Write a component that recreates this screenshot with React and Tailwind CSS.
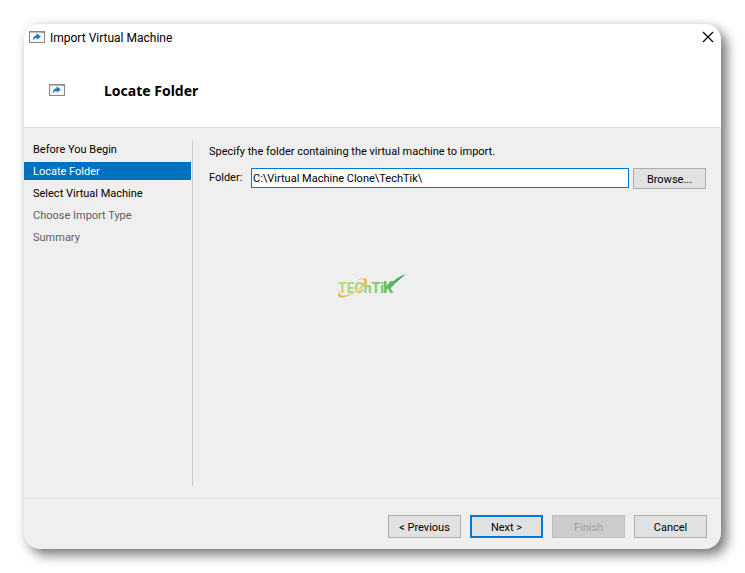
import { useState } from 'react';

const steps = [
  { name: 'Before You Begin', status: 'open' },
  { name: 'Locate Folder', status: 'current' },
  { name: 'Select Virtual Machine', status: 'open' },
  { name: 'Choose Import Type', status: 'locked' },
  { name: 'Summary', status: 'locked' },
];

const stepStyles = {
  open: 'text-black',
  current: 'bg-[#0072bd] text-white',
  locked: 'text-[#606060]',
};

const buttonStyles = {
  normal: 'border border-[#adadad] bg-[#e1e1e1] text-black',
  primary: 'border-2 border-[#0078d7] bg-[#e1e1e1] text-black',
  disabled: 'border border-[#bfbfbf] bg-[#cccccc] text-[#a0a0a0]',
};

const ImportIcon = () => (
  <svg width="16" height="12" viewBox="0 0 16 12" aria-hidden="true">
    <rect x="0.5" y="0.5" width="15" height="11" fill="#f6f6f6" stroke="#86888a" />
    <path d="M0 0.7H16" stroke="#86888a" strokeWidth="1.4" />
    <path d="M12 1.5H13M14 1.5H15" stroke="#86888a" />
    <path
      d="M7.6 2.2L11.8 5.5L7.9 8.8V7.1C6.2 7.1 5.2 7.8 4 9.6C3.8 6.6 5 4.6 7.6 4.3Z"
      fill="#2478bf"
    />
  </svg>
);

const CloseIcon = () => (
  <svg width="12" height="12" viewBox="0 0 12 12" aria-hidden="true">
    <path d="M1 1L11 11M11 1L1 11" stroke="#000" strokeWidth="1.2" />
  </svg>
);

const Logo = () => (
  <svg width="70" height="26" viewBox="0 0 70 26" role="img" aria-label="TechTik">
    <defs>
      <linearGradient id="leaf" x1="0" x2="1">
        <stop offset="0" stopColor="#b8d98a" />
        <stop offset="0.5" stopColor="#a3d376" />
        <stop offset="1" stopColor="#72c163" />
      </linearGradient>
      <linearGradient id="check" x1="0" x2="1">
        <stop offset="0" stopColor="#6cc064" />
        <stop offset="1" stopColor="#2e9a50" />
      </linearGradient>
      <linearGradient id="gold" x1="0" y1="1" x2="1" y2="0">
        <stop offset="0" stopColor="#dfae1c" />
        <stop offset="0.5" stopColor="#f3e08a" />
        <stop offset="1" stopColor="#e6b422" />
      </linearGradient>
    </defs>
    <text
      x="1"
      y="20"
      fill="url(#leaf)"
      className="font-['Roboto',sans-serif] text-[14px] font-bold"
    >
      TEChTi
    </text>
    <text
      x="46"
      y="20"
      fill="#5dba61"
      className="font-['Roboto',sans-serif] text-[16px] font-bold"
    >
      K
    </text>
    <path d="M49 15C54 9 61 4 69 1C64 5 58 10 54 15L51 16Z" fill="url(#check)" />
    <path
      d="M5 17C-1 21 0 26 8 24C17 22 30 13 30 8C30 4 24 5 19 8C24 6 28 5 27 9C25 14 14 22 7 22.5C2 23 2 20 5 17Z"
      fill="url(#gold)"
    />
  </svg>
);

const Button = ({ variant = 'normal', className = 'h-[23px]', children }) => (
  <button
    type="button"
    disabled={variant === 'disabled'}
    className={`w-[73px] shrink-0 flex items-center justify-center whitespace-nowrap pt-0.5 ${buttonStyles[variant]} ${className}`}
  >
    {children}
  </button>
);

const App = () => {
  const [folder, setFolder] = useState('C:\\Virtual Machine Clone\\TechTik\\');

  return (
    <div className="min-h-screen bg-white p-6 flex font-['Roboto',sans-serif] text-[11px] leading-4 text-black">
      <div
        role="dialog"
        aria-labelledby="title"
        className="flex-1 min-w-0 flex flex-col overflow-hidden rounded-2xl bg-[#efefef] shadow-[6px_6px_12px_rgba(0,0,0,0.5),0_0_12px_rgba(0,0,0,0.08)]"
      >
        <header className="bg-white border-b border-[#dcdcdc] pb-[25px]">
          <div className="flex items-center gap-[5px] pl-[5px] pr-[7px] pt-0.5">
            <ImportIcon />
            <h1 id="title" className="flex-1 pt-0.5 text-xs leading-5">
              Import Virtual Machine
            </h1>
            <button type="button" aria-label="Close">
              <CloseIcon />
            </button>
          </div>
          <div className="flex items-center gap-[39px] pl-[25px] pt-[30px]">
            <ImportIcon />
            <h2 className="pt-0.5 font-['Noto_Sans',sans-serif] text-sm leading-[22px] font-bold">
              Locate Folder
            </h2>
          </div>
        </header>

        <div className="flex-1 flex py-3">
          <nav className="w-[169px] shrink-0 border-r border-[#cacaca] pr-px">
            <ul className="flex flex-col gap-1">
              {steps.map((step) => (
                <li
                  key={step.name}
                  aria-current={step.status === 'current' ? 'step' : undefined}
                  className={`pl-[9px] pt-0.5 ${stepStyles[step.status]}`}
                >
                  {step.name}
                </li>
              ))}
            </ul>
          </nav>

          <main className="flex-1 min-w-0 pl-4 pr-[15px] pt-1">
            <p>Specify the folder containing the virtual machine to import.</p>
            <div className="mt-2 flex items-start">
              <label htmlFor="folder" className="w-[42px] shrink-0 pt-0.5">
                Folder:
              </label>
              <input
                type="text"
                id="folder"
                name="folder"
                autoComplete="off"
                value={folder}
                onChange={(e) => setFolder(e.target.value)}
                className="h-5 min-w-0 flex-1 border border-[#0078d7] bg-white px-px outline-0"
              />
              <Button className="ml-1 h-[21px]">Browse...</Button>
            </div>
            <div className="mt-[84px] pl-32">
              <Logo />
            </div>
          </main>
        </div>

        <footer className="border-t border-[#dcdcdc] flex justify-end gap-[9px] pt-4 pb-[11px] pr-3.5">
          <Button>&lt; Previous</Button>
          <Button variant="primary">Next &gt;</Button>
          <Button variant="disabled">Finish</Button>
          <Button>Cancel</Button>
        </footer>
      </div>
    </div>
  );
};

export default App;
